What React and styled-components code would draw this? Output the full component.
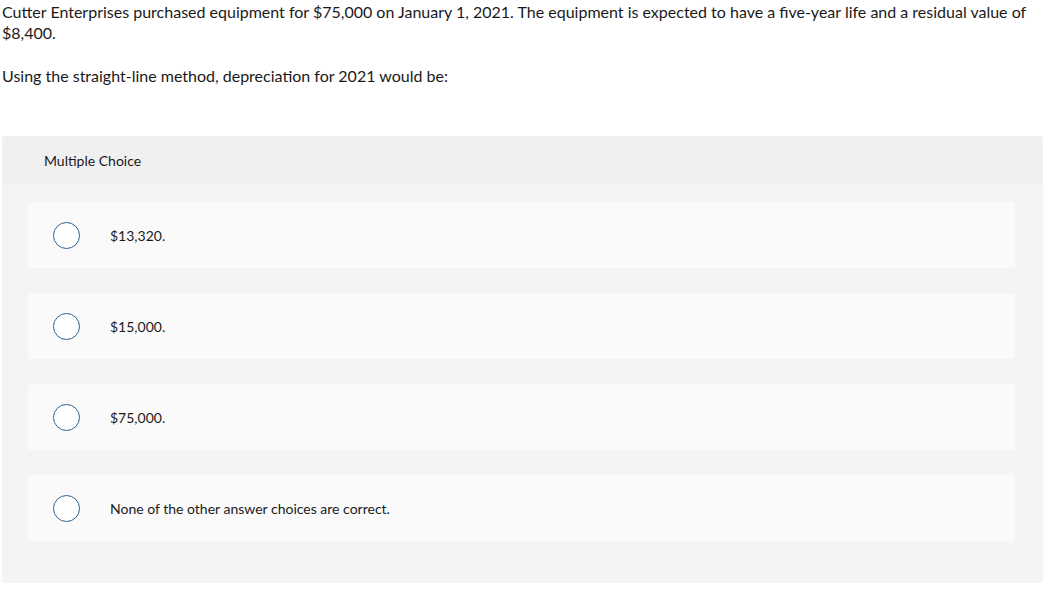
import styled, { createGlobalStyle } from 'styled-components';

const GlobalStyle = createGlobalStyle`
  body {
    margin: 0;
    background: #fff;
    font-family: Lato, "Open Sans", sans-serif;
    color: #1a1a1a;
  }
`;

const options = [
  '$13,320.',
  '$15,000.',
  '$75,000.',
  'None of the other answer choices are correct.',
];

export default function App() {
  return (
    <>
      <GlobalStyle />
      <Page>
        <Question>
          Cutter Enterprises purchased equipment for $75,000 on January 1, 2021. The
          equipment is expected to have a five-year life and a residual value of $8,400.
        </Question>
        <Question>Using the straight-line method, depreciation for 2021 would be:</Question>

        <Panel>
          <PanelHeader>Multiple Choice</PanelHeader>
          <Choices>
            {options.map((opt) => (
              <Choice key={opt}>
                <Radio />
                <ChoiceText>{opt}</ChoiceText>
              </Choice>
            ))}
          </Choices>
        </Panel>
      </Page>
    </>
  );
}

const Page = styled.div`
  padding: 0 11px 0 2px;
`;

const Question = styled.p`
  margin: 0 0 21px;
  font-size: 16px;
  line-height: 21px;
  padding-top: 1px;
`;

const Panel = styled.div`
  margin-top: 50px;
  width: 1041px;
  background: #f4f4f4;
  border-radius: 4px;
  overflow: hidden;
`;

const PanelHeader = styled.div`
  height: 49px;
  display: flex;
  align-items: center;
  padding-left: 42px;
  background: #f0f0f0;
  font-size: 14px;
`;

const Choices = styled.div`
  display: flex;
  flex-direction: column;
  gap: 25px;
  padding: 17px 28px 42px 26px;
`;

const Choice = styled.div`
  height: 66px;
  display: flex;
  align-items: center;
  padding-left: 25px;
  background: #fafafa;
  border-radius: 3px;
`;

const Radio = styled.span`
  width: 25px;
  height: 25px;
  border: 1.5px solid #2e5f8f;
  border-radius: 50%;
  background: #fff;
  flex-shrink: 0;
`;

const ChoiceText = styled.span`
  margin-left: 30px;
  font-size: 14px;
`;
